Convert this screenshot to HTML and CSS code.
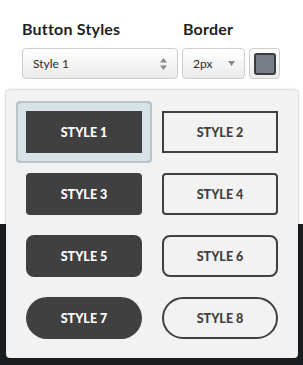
FILE: index.html
```html
<!DOCTYPE html>
<html>
<head>
<meta charset="utf-8">
<link rel="stylesheet" href="styles.css">
</head>
<body>
<div class="toolbar">
  <div class="label label-style">Button Styles</div>
  <div class="label label-border">Border</div>
  <div class="select select-style">
    <span>Style 1</span>
    <svg class="updown" width="7" height="12" viewBox="0 0 7 12"><path d="M3.5 0 L7 4.5 L0 4.5 Z" fill="#8a8a8a"/><path d="M0 7.5 L7 7.5 L3.5 12 Z" fill="#8a8a8a"/></svg>
  </div>
  <div class="select select-border">
    <span>2px</span>
    <svg class="down" width="7" height="5" viewBox="0 0 7 5"><path d="M0 0 L7 0 L3.5 5 Z" fill="#8a8a8a"/></svg>
  </div>
  <div class="swatch-btn"><div class="swatch"></div></div>
</div>
<div class="panel">
  <div class="cell selected"><div class="btn solid r0">STYLE 1</div></div>
  <div class="cell"><div class="btn outline r0">STYLE 2</div></div>
  <div class="cell"><div class="btn solid r1">STYLE 3</div></div>
  <div class="cell"><div class="btn outline r1">STYLE 4</div></div>
  <div class="cell"><div class="btn solid r2">STYLE 5</div></div>
  <div class="cell"><div class="btn outline r2">STYLE 6</div></div>
  <div class="cell"><div class="btn solid r3">STYLE 7</div></div>
  <div class="cell"><div class="btn outline r3">STYLE 8</div></div>
</div>
</body>
</html>
```
FILE: styles.css
```css
html, body {
  margin: 0;
  padding: 0;
}
body {
  width: 303px;
  height: 365px;
  overflow: hidden;
  background: linear-gradient(to bottom, #ffffff 0, #ffffff 224px, #1b1e21 224px, #1b1e21 100%);
  font-family: Lato, "Open Sans", sans-serif;
  color: #333;
}
.toolbar {
  display: grid;
  grid-template-columns: 156px 63px 31px;
  grid-template-rows: 24px 31px;
  column-gap: 4px;
  row-gap: 7px;
  padding: 17px 0 0 22px;
}
.label {
  font-weight: 700;
  font-size: 16px;
  line-height: 24px;
  color: #1f1f1f;
  letter-spacing: 0.2px;
}
.label-border {
  grid-column: 2 / 4;
  margin-left: 1px;
}
.select {
  box-sizing: border-box;
  height: 31px;
  border: 1px solid #cdcdcd;
  border-radius: 4px;
  background: linear-gradient(to bottom, #ffffff, #ebebeb);
  display: flex;
  align-items: center;
  justify-content: space-between;
  font-size: 12px;
  color: #2a2a2a;
}
.select-style {
  padding: 0 10px 0 10px;
}
.select-border {
  padding: 0 9px 0 10px;
}
.swatch-btn {
  box-sizing: border-box;
  height: 31px;
  border: 1px solid #cdcdcd;
  border-radius: 4px;
  background: linear-gradient(to bottom, #ffffff, #ebebeb);
  display: flex;
  align-items: center;
  justify-content: center;
}
.swatch {
  box-sizing: border-box;
  width: 22px;
  height: 22px;
  border: 2px solid #3b3b3b;
  border-radius: 3px;
  background: #787e87;
}
.panel {
  box-sizing: border-box;
  margin: 11px 0 0 6px;
  width: 292px;
  height: 268px;
  background: #f2f2f2;
  border-radius: 4px;
  box-shadow: 0 0 3px rgba(0, 0, 0, 0.35);
  display: grid;
  grid-template-columns: 116px 116px;
  grid-auto-rows: 42px;
  column-gap: 20px;
  row-gap: 20px;
  padding: 21px 20px 0 20px;
}
.cell.selected {
  border-radius: 1px;
  box-shadow: 0 0 0 8px #d8e3e8, 0 0 0 10px #b7c5c6;
}
.btn {
  box-sizing: border-box;
  height: 42px;
  display: flex;
  align-items: center;
  justify-content: center;
  font-weight: 900;
  font-size: 12.5px;
}
.solid {
  background: #404040;
  color: #ffffff;
}
.outline {
  border: 2px solid #404040;
  color: #404040;
}
.r0 { border-radius: 0; }
.r1 { border-radius: 4px; }
.r2 { border-radius: 8px; }
.r3 { border-radius: 21px; }
```
